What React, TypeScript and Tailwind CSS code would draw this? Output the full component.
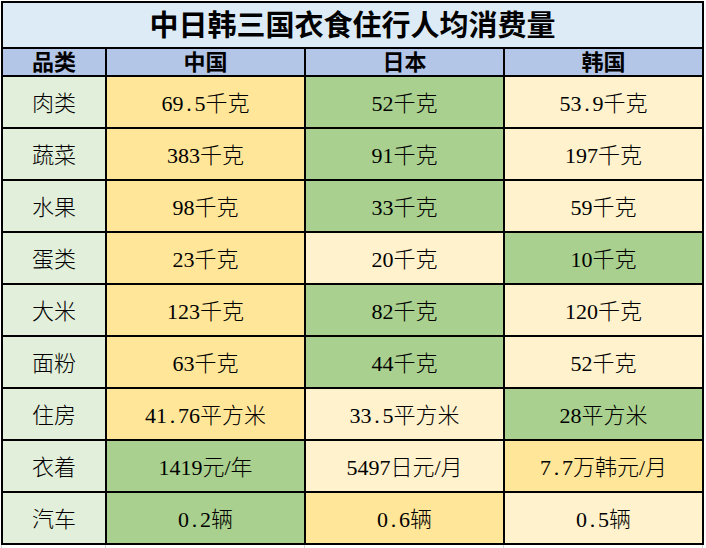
import React from "react";

type C = "y" | "g" | "l";
const bg: Record<C, string> = { y: "bg-[#FFE699]", g: "bg-[#A9D08E]", l: "bg-[#FFF2CC]" };

const rows: { name: string; cells: [string, C][] }[] = [
  { name: "肉类", cells: [["69.5千克", "y"], ["52千克", "g"], ["53.9千克", "l"]] },
  { name: "蔬菜", cells: [["383千克", "y"], ["91千克", "g"], ["197千克", "l"]] },
  { name: "水果", cells: [["98千克", "y"], ["33千克", "g"], ["59千克", "l"]] },
  { name: "蛋类", cells: [["23千克", "y"], ["20千克", "l"], ["10千克", "g"]] },
  { name: "大米", cells: [["123千克", "y"], ["82千克", "g"], ["120千克", "l"]] },
  { name: "面粉", cells: [["63千克", "y"], ["44千克", "g"], ["52千克", "l"]] },
  { name: "住房", cells: [["41.76平方米", "y"], ["33.5平方米", "l"], ["28平方米", "g"]] },
  { name: "衣着", cells: [["1419元/年", "g"], ["5497日元/月", "l"], ["7.7万韩元/月", "y"]] },
  { name: "汽车", cells: [["0.2辆", "g"], ["0.6辆", "y"], ["0.5辆", "l"]] },
];

const font = { fontFamily: '"Liberation Serif", "Noto Sans CJK SC", serif' };

function Val({ t }: { t: string }) {
  const parts = t.split(".");
  return (
    <span>
      {parts.map((p, i) => (
        <React.Fragment key={i}>
          {i > 0 && <span className="inline-block w-[0.5em] text-center">.</span>}
          {p}
        </React.Fragment>
      ))}
    </span>
  );
}

function GrayTicks({ h }: { h: string }) {
  return (
    <div className={`flex w-[706px] ${h}`}>
      <div className="w-[1px]" />
      <div className="w-[1px] bg-[#d4d4d4]" />
      <div className="w-[103px]" />
      <div className="w-[1px] bg-[#d4d4d4]" />
      <div className="w-[198px]" />
      <div className="w-[1px] bg-[#d4d4d4]" />
      <div className="w-[198px]" />
      <div className="w-[1px] bg-[#d4d4d4]" />
      <div className="w-[198px]" />
      <div className="w-[1px] bg-[#d4d4d4]" />
    </div>
  );
}

export default function App() {
  return (
    <div className="w-[706px] h-[548px] bg-white overflow-hidden text-black" style={font}>
      <div className="h-[1px]" />
      <div className="ml-[1px] w-[703px] bg-black p-[2px]">
        <div className="grid grid-cols-[102px_197px_197px_197px] gap-[2px]">
          <div className="col-span-4 h-[44px] pt-[3px] bg-[#DDEBF7] flex items-center justify-center text-[29px] font-bold leading-none">
            中日韩三国衣食住行人均消费量
          </div>
          {["品类", "中国", "日本", "韩国"].map((t) => (
            <div key={t} className="h-[26px] pt-[2px] bg-[#B4C6E7] flex items-center justify-center text-[22px] font-bold leading-none">
              {t}
            </div>
          ))}
          {rows.map((r) => (
            <React.Fragment key={r.name}>
              <div className="h-[50px] pt-[3px] bg-[#E2EFDA] flex items-center justify-center text-[22px] font-light leading-none">{r.name}</div>
              {r.cells.map(([t, c], i) => (
                <div key={i} className={`h-[50px] pt-[3px] ${bg[c]} flex items-center justify-center text-[22px] font-light leading-none`}>
                  <Val t={t} />
                </div>
              ))}
            </React.Fragment>
          ))}
        </div>
      </div>
      <GrayTicks h="h-[4px]" />
    </div>
  );
}
